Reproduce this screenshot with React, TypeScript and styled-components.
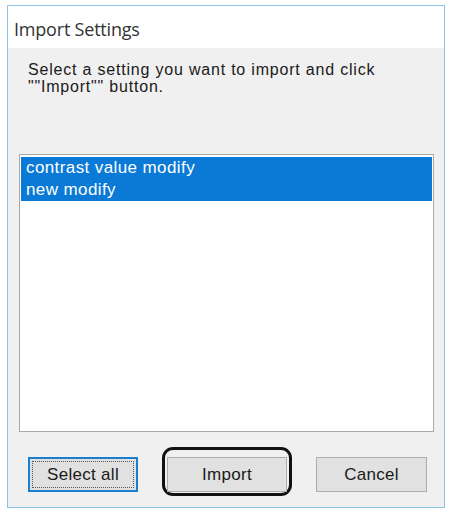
import { createGlobalStyle, styled } from "styled-components";

const GlobalStyle = createGlobalStyle`
	html, body {
		margin: 0;
		padding: 0;
		background: #ffffff;
	}
	body {
		font-family: "Liberation Sans", Arial, sans-serif;
		color: #111;
	}
`;

const settings = ["contrast value modify", "new modify"];

export default function App() {
	return (
		<>
			<GlobalStyle />
			<Page>
				<Window>
					<TitleBar>Import Settings</TitleBar>
					<Body>
						<Prompt>
							Select a setting you want to import and click
							<br />
							""Import"" button.
						</Prompt>
						<ListBox>
							{settings.map((s) => (
								<ListItem key={s} $selected>
									{s}
								</ListItem>
							))}
						</ListBox>
						<ButtonRow>
							<Button $width={110} $focused>
								<FocusRect>Select all</FocusRect>
							</Button>
							<Highlight>
								<Button $width={120}>Import</Button>
							</Highlight>
							<Button $width={111}>Cancel</Button>
						</ButtonRow>
					</Body>
				</Window>
			</Page>
		</>
	);
}

const Page = styled.div`
	padding: 5px 6px 0 7px;
	width: 451px;
	height: 512px;
	box-sizing: border-box;
`;

const Window = styled.div`
	width: 438px;
	height: 503px;
	box-sizing: border-box;
	border: 1px solid #8cc1e8;
	display: flex;
	flex-direction: column;
	background: #f0f0f0;
`;

const TitleBar = styled.div`
	height: 42px;
	flex: none;
	background: #ffffff;
	box-sizing: border-box;
	padding: 11px 0 0 6px;
	font-family: "Open Sans", "Noto Sans", sans-serif;
	font-size: 18px;
	letter-spacing: -0.2px;
	color: #333333;
`;

const Body = styled.div`
	flex: 1;
	display: flex;
	flex-direction: column;
	padding: 13px 10px 0 11px;
`;

const Prompt = styled.div`
	margin-left: 9px;
	font-size: 16px;
	line-height: 17px;
	letter-spacing: 0.8px;
	color: #1a1a1a;
`;

const ListBox = styled.div`
	margin-top: 59px;
	width: 415px;
	height: 278px;
	box-sizing: border-box;
	border: 1px solid #a8a8a8;
	background: #ffffff;
	padding: 2px 1px;
`;

const ListItem = styled.div<{ $selected?: boolean }>`
	height: 22px;
	line-height: 22px;
	padding-left: 5px;
	font-size: 17px;
	letter-spacing: 0.4px;
	background: ${(p) => (p.$selected ? "#0a7ad6" : "transparent")};
	color: ${(p) => (p.$selected ? "#ffffff" : "#111")};
`;

const ButtonRow = styled.div`
	margin-top: 15px;
	display: flex;
	align-items: flex-end;
	padding-left: 9px;
`;

const Button = styled.div<{ $width: number; $focused?: boolean }>`
	width: ${(p) => p.$width}px;
	height: 35px;
	margin-bottom: 4px;
	box-sizing: border-box;
	display: flex;
	align-items: center;
	justify-content: center;
	background: #e1e1e1;
	border: ${(p) => (p.$focused ? "2px solid #1a7fcf" : "1px solid #adadad")};
	font-size: 17px;
	letter-spacing: 0.3px;
	color: #1a1a1a;
	padding: ${(p) => (p.$focused ? "2px" : "0")};
`;

const FocusRect = styled.div`
	width: 100%;
	height: 100%;
	box-sizing: border-box;
	border: 1px dotted #555;
	display: flex;
	align-items: center;
	justify-content: center;
`;

const Highlight = styled.div`
	margin: 0 24px;
	padding: 7px 2px 1px;
	border: 3px solid #111;
	border-radius: 11px;

	& > div {
		margin-bottom: 0;
	}
`;
